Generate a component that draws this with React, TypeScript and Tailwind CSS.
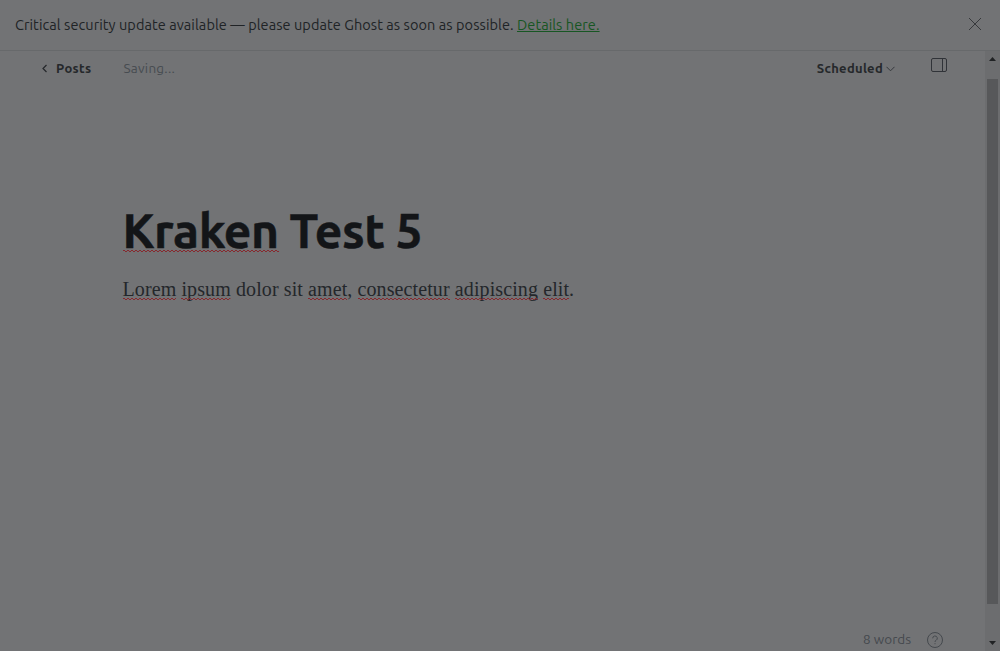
import type { ReactNode } from 'react';

function Squiggle({ children, bottom = 'bottom-0' }: { children: ReactNode; bottom?: string }) {
  const id = 'wave';
  return (
    <span className="relative inline-block">
      {children}
      <svg className={`absolute left-0 h-[2px] w-full ${bottom}`} aria-hidden="true">
        <defs>
          <pattern id={id} width="4" height="2" patternUnits="userSpaceOnUse">
            <path d="M0 .5h2M2 1.5h2" stroke="#87282e" strokeWidth="1.2" fill="none" />
          </pattern>
        </defs>
        <rect width="100%" height="2" fill={`url(#${id})`} />
      </svg>
    </span>
  );
}

function Banner() {
  return (
    <div className="flex h-[51px] shrink-0 items-center justify-between border-b border-[#67696b] pr-[18px] pl-[15px]">
      <p className="text-[14.5px] leading-5 tracking-[0.07px] whitespace-nowrap text-[#202326]">
        <span>Critical security update available — please update Ghost as soon as possible. </span>
        <a className="text-[#175623] underline">Details here.</a>
      </p>
      <svg className="-mt-[2px] size-[14px]" viewBox="0 0 14 14" fill="none" stroke="#303235" strokeWidth="0.9">
        <path d="M1 1l12 12M13 1L1 13" />
      </svg>
    </div>
  );
}

function Toolbar() {
  return (
    <header className="flex h-[34px] shrink-0 items-center pr-[38px] pl-[41px] text-[13px] leading-5">
      <svg className="h-[9px] w-[7px]" viewBox="0 0 7 9" fill="none" stroke="#25282b" strokeWidth="1.2">
        <path d="M5.5 1L2 4.5L5.5 8" />
      </svg>
      <span className="ml-[8px] w-[67.5px] font-semibold tracking-[0.35px] text-[#25282b]">Posts</span>
      <span className="text-[13.5px] tracking-[0.25px] text-[#474c51]">Saving...</span>
      <span className="ml-auto font-semibold tracking-[0.3px] text-[#25282b]">Scheduled</span>
      <svg className="mt-[2px] ml-[3px] h-[6px] w-[9px]" viewBox="0 0 9 6" fill="none" stroke="#35383c" strokeWidth="1">
        <path d="M.5 .8L4.5 4.8L8.5 .8" />
      </svg>
      <svg className="-mt-[7px] ml-[36px] h-[14px] w-4" viewBox="0 0 16 14" fill="none" stroke="#303338" strokeWidth="1">
        <rect x=".5" y=".5" width="15" height="13" rx="1.5" />
        <path d="M11.5 .5v13" />
      </svg>
    </header>
  );
}

function Scrollbar() {
  return (
    <div className="flex w-[15px] shrink-0 flex-col items-center bg-[#6c6d6f]">
      <div className="flex h-[28px] w-full justify-center pt-[6px]">
        <svg className="h-[4px] w-[7px]" viewBox="0 0 7 4" fill="#202224"><path d="M3.5 0L7 4H0z" /></svg>
      </div>
      <div className="h-[525px] w-[11px] bg-[#57585a]" />
      <div className="mt-auto pb-[6px]">
        <svg className="h-[4px] w-[7px]" viewBox="0 0 7 4" fill="#202224"><path d="M0 0h7L3.5 4z" /></svg>
      </div>
    </div>
  );
}

export default function App() {
  return (
    <div className="flex h-[651px] w-[1000px] flex-col overflow-hidden bg-[#727375] font-['Ubuntu','Noto_Sans',sans-serif]">
      <Banner />
      <div className="flex min-h-0 flex-1">
        <div className="flex min-w-0 flex-1 flex-col">
          <Toolbar />
          <main className="flex-1 pt-[117px] pl-[122.5px]">
            <h1 className="text-[48px] leading-[56px] font-bold tracking-[-0.4px] whitespace-nowrap text-[#131518] [-webkit-text-stroke:0.5px_#131518]">
              <Squiggle bottom="bottom-[6px]">Kraken</Squiggle> Test 5
            </h1>
            <p className="mt-[17px] font-['Liberation_Serif',serif] text-[20px] leading-[28px] tracking-[0.1px] whitespace-nowrap text-[#24272b]">
              <Squiggle bottom="bottom-[3px]">Lorem</Squiggle> <Squiggle bottom="bottom-[3px]">ipsum</Squiggle> dolor sit{' '}
              <Squiggle bottom="bottom-[3px]">amet</Squiggle>, <Squiggle bottom="bottom-[3px]">consectetur</Squiggle>{' '}
              <Squiggle bottom="bottom-[3px]">adipiscing</Squiggle> <Squiggle bottom="bottom-[3px]">elit</Squiggle>.
            </p>
          </main>
          <footer className="flex h-[22px] shrink-0 items-center justify-end gap-4 pr-[42px] text-[13px] leading-5 text-[#45494e]">
            <span className="pb-[2px] text-[13.5px] leading-[18px]">8 words</span>
            <svg className="size-4" viewBox="0 0 16 16" fill="none" stroke="#45494e" strokeWidth="1">
              <circle cx="8" cy="8" r="7.5" />
              <path d="M5.7 6.3a2.3 2.3 0 1 1 3.4 2c-.8.4-1.1.8-1.1 1.6M8 11.2v1" />
            </svg>
          </footer>
        </div>
        <Scrollbar />
      </div>
    </div>
  );
}
